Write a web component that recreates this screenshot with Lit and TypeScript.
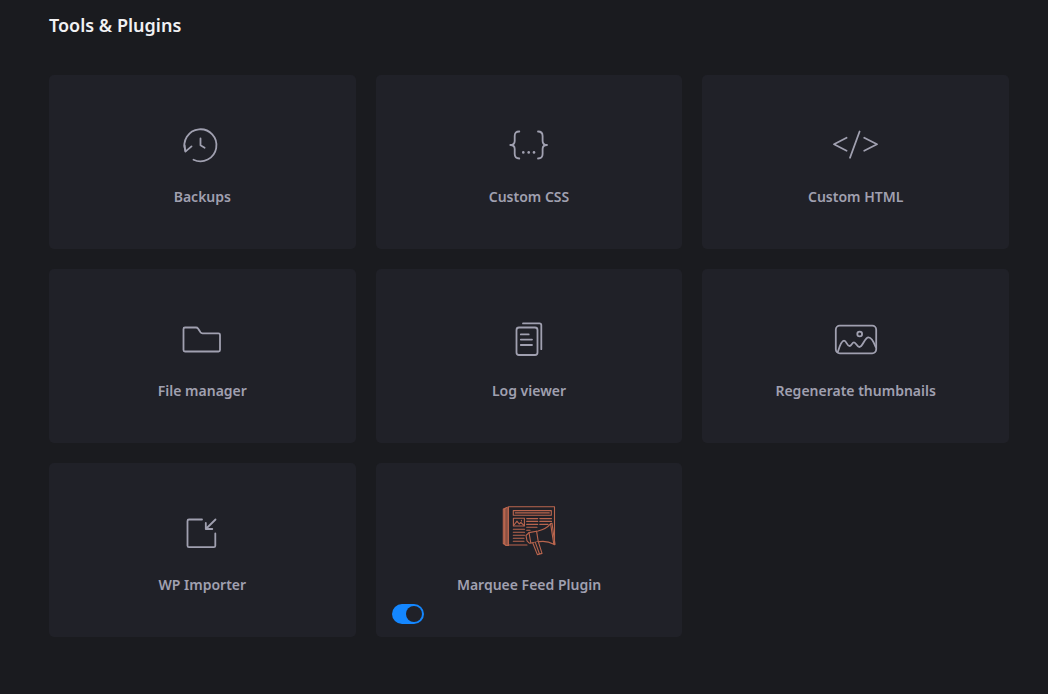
import { LitElement, html, svg, css, nothing } from "lit";
import { customElement, property, state } from "lit/decorators.js";

const icons = {
  backups: svg`
    <path d="M21.5 44.7A16 16 0 1 0 13.5 36"/>
    <path d="M12.5 30.5L13.4 36.6L19.5 31.4M28.5 23.5V30.3L32.6 32.7"/>`,
  css: svg`
    <path d="M20.3 16.5C17 16.5 15.7 18 15.7 21V26C15.7 28.5 14.5 30 11.3 30C14.5 30 15.7 31.5 15.7 34V39C15.7 42 17 43.5 20.3 43.5"/>
    <path d="M39 16.5C42.3 16.5 43.6 18 43.6 21V26C43.6 28.5 44.8 30 48 30C44.8 30 43.6 31.5 43.6 34V39C43.6 42 42.3 43.5 39 43.5"/>
    <g class="solid"><circle cx="24.3" cy="37.4" r="1.3"/><circle cx="29.7" cy="37.4" r="1.3"/><circle cx="35" cy="37.4" r="1.3"/></g>`,
  html: svg`<path d="M20.6 22.8L8 29.3L20.6 35.7M33.6 16.5L24 42.7M38.2 22.8L51 29.3L38.2 35.7"/>`,
  folder: svg`<path d="M13 18.5H24Q25.3 18.5 26 19.5L28.5 23.3Q29.2 24.3 30.5 24.3H46.5Q48 24.3 48 25.8V41Q48 42.5 46.5 42.5H13Q11.5 42.5 11.5 41V20Q11.5 18.5 13 18.5Z"/>`,
  log: svg`
    <rect x="17.5" y="18.5" width="21" height="27.5" rx="2.5"/>
    <path d="M24 14.4H40.5Q42.3 14.4 42.3 16.2V40.2M21.8 25.4H29.7M21.8 30.6H33M21.8 36H33"/>`,
  image: svg`
    <rect x="9.8" y="16.7" width="40.4" height="27.6" rx="4"/>
    <circle cx="33.7" cy="25" r="2.4"/>
    <path d="M11.8 43C13 39 15.3 31.7 18 31.7C20.5 31.7 21 37 23.5 37C25.5 37 26 33.3 28 33.3C30 33.3 31 38 33.3 38C37 38 38.5 28.3 42.5 28.3C46 28.3 48 33.5 49.7 38"/>`,
  importer: svg`
    <path d="M30 16.5H17Q15.5 16.5 15.5 18V42.7Q15.5 44.2 17 44.2H41.8Q43.3 44.2 43.3 42.7V30.5"/>
    <path d="M43.5 16.5L33.8 26M33.8 20V26H40.3"/>`,
  marquee: svg`
    <path d="M9.5 3.8H55.5V41.8M9.5 3.8V42H28M9.5 4L6.8 4.8V42.4H9.5M6.8 5L4.3 6V40.5L6.8 42.4M5.5 6V41M8.2 5V42"/>
    <rect x="14.3" y="7.6" width="38" height="4.6"/><path d="M16.3 9.9H50.3"/>
    <rect x="14.4" y="15.2" width="11" height="7.8"/>
    <path d="M15 22L18 18.2L20.2 21L21.8 19.5L25 22.4M22.4 17.2V18"/>
    <path d="M27.7 15.6H38.7M27.7 18.4H38.7M27.7 21.4H38.7M27.7 24.2H38M40.8 15.6H52.5M40.8 18.4H52.5M40.8 21.4H49M14.3 26.2H25.5M14.3 29.2H25.5M14.3 32.2H25.5M14.3 35.2H25M14.3 38.2H25M27.7 27.2H31"/>
    <path class="megaphone" d="M30 29.6L39 28C44 26.8 49 24 51.6 20.6L54.8 41.2C50.5 38.8 45 38 40.5 38.6L30.5 40.3L28 37.8L27 32.5Z"/>
    <path d="M37.6 28.3L39.3 38.8M30 29.6L31.8 40M51.6 20.6L53 20.2L56 41.4L54.8 41.2"/>
    <path class="megaphone" d="M33.8 40L38.4 51.6L43 50.4L39.4 38.8M36.4 39.6L40.4 50.8"/>`,
};

type IconName = keyof typeof icons;
interface Tool { name: string; icon: IconName; toggle?: boolean }

const tools: Tool[] = [
  { name: "Backups", icon: "backups" },
  { name: "Custom CSS", icon: "css" },
  { name: "Custom HTML", icon: "html" },
  { name: "File manager", icon: "folder" },
  { name: "Log viewer", icon: "log" },
  { name: "Regenerate thumbnails", icon: "image" },
  { name: "WP Importer", icon: "importer" },
  { name: "Marquee Feed Plugin", icon: "marquee", toggle: true },
];

@customElement("tool-card")
export class ToolCard extends LitElement {
  @property({ attribute: false }) tool!: Tool;
  @state() private enabled = true;

  static styles = css`
    :host { display: block; }
    .card {
      box-sizing: border-box;
      display: flex;
      flex-direction: column;
      height: 100%;
      min-height: 174px;
      padding: 40px 16px 13px;
      border-radius: 5px;
      background: #202128;
    }
    .link {
      display: flex;
      flex-direction: column;
      align-items: center;
      gap: 12px;
      color: #a0a0b0;
      text-decoration: none;
      text-align: center;
    }
    .icon {
      width: 60px;
      height: 60px;
      fill: none;
      stroke: #a0a0b0;
      stroke-width: 1.8;
      stroke-linecap: round;
      stroke-linejoin: round;
    }
    .icon.marquee { stroke: #b9654e; stroke-width: 1.1; }
    .solid { fill: #a0a0b0; stroke: none; }
    .megaphone { fill: #202128; }
    .toggle {
      appearance: none;
      display: flex;
      box-sizing: border-box;
      width: 32px;
      height: 20px;
      margin: 9px 0 0;
      padding: 2px;
      border-radius: 10px;
      background: #4b4c57;
      cursor: pointer;
    }
    .toggle::before {
      content: "";
      width: 16px;
      height: 16px;
      border-radius: 50%;
      background: #202128;
    }
    .toggle:checked { justify-content: flex-end; background: #1487ff; }
  `;

  render() {
    const { name, icon, toggle } = this.tool;
    return html`
      <article class="card">
        <a class="link" href="#">
          <svg class="icon ${icon}" viewBox="0 0 60 60" aria-hidden="true">${icons[icon]}</svg>
          <span>${name}</span>
        </a>
        ${toggle
          ? html`<input class="toggle" type="checkbox" role="switch" aria-label=${name}
              .checked=${this.enabled}
              @change=${(e: Event) => (this.enabled = (e.target as HTMLInputElement).checked)} />`
          : nothing}
      </article>`;
  }
}

@customElement("app-root")
export class AppRoot extends LitElement {
  static styles = css`
    :host {
      display: block;
      box-sizing: border-box;
      min-height: 100vh;
      padding: 10px 39px 40px 49px;
      background: #1a1b1f;
      font: 600 14px/20px "Segoe UI", "Noto Sans", "Open Sans", sans-serif;
    }
    .title {
      margin: 0 0 35px;
      color: #f1f1f3;
      font-size: 18px;
      font-weight: 600;
      line-height: 30px;
    }
    .grid {
      display: grid;
      grid-template-columns: repeat(3, minmax(0, 1fr));
      gap: 20px;
    }
  `;

  render() {
    return html`
      <main>
        <h1 class="title">Tools &amp; Plugins</h1>
        <div class="grid">
          ${tools.map((tool) => html`<tool-card .tool=${tool}></tool-card>`)}
        </div>
      </main>`;
  }
}
